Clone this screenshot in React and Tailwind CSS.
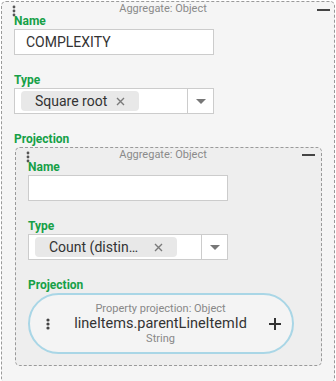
import React from "react";

const FONT = { fontFamily: "Roboto, 'Noto Sans', sans-serif" };

function Dots({ className = "", color = "#555", r = 1.5 }) {
  return (
    <svg width="4" height="12" viewBox="0 0 4 12" className={className}>
      {[2, 6, 10].map((cy) => (
        <circle key={cy} cx="2" cy={cy} r={r} fill={color} />
      ))}
    </svg>
  );
}

function XIcon() {
  return (
    <svg width="9" height="9" viewBox="0 0 9 9" className="shrink-0">
      <path d="M1 1L8 8M8 1L1 8" stroke="#7a7a7a" strokeWidth="1.4" />
    </svg>
  );
}

function Label({ children }) {
  return (
    <div className="text-[12px] leading-[15px] font-bold text-[#16a047]">{children}</div>
  );
}

function TextInput({ value }) {
  return (
    <div className="w-[200px] h-[26px] bg-white border border-[#cccccc] flex items-center pl-[11px] text-[14px] text-[#333]">
      {value}
    </div>
  );
}

function Select({ chip, truncateW }) {
  return (
    <div className="w-[200px] h-[26px] bg-white border border-[#cccccc] flex">
      <div className="flex-1 flex items-center pl-[6px]">
        <div className="h-[20px] bg-[#e8e8e8] rounded-[4px] flex items-center pl-[14px] pr-[14px] text-[14px] text-[#333]">
          {truncateW ? (
            <span className="block w-[96px] truncate">{chip}</span>
          ) : (
            <span>{chip}</span>
          )}
          <span className="ml-[9px] flex items-center">
            <XIcon />
          </span>
        </div>
      </div>
      <div className="w-[26px] border-l border-[#cccccc] flex items-center justify-center">
        <svg width="10" height="5" viewBox="0 0 10 5">
          <path d="M0 0H10L5 5Z" fill="#777" />
        </svg>
      </div>
    </div>
  );
}

function Header({ minusMt, pr, textPr }) {
  return (
    <div className={`flex items-start h-[12px] pl-[10px] ${pr}`}>
      <Dots className="mt-[3px] shrink-0" r={1.4} />
      <div className={`flex-1 text-center ${textPr} text-[11px] leading-[14px] text-[#8a8a8a]`}>
        Aggregate: Object
      </div>
      <div className={`${minusMt} w-[13px] h-[2px] bg-[#444] shrink-0`} />
    </div>
  );
}

export default function App() {
  return (
    <div className="bg-white w-[336px] h-[381px] overflow-hidden" style={FONT}>
      <div className="ml-[1px] mt-[1px] w-[334px] h-[382px] bg-[#f5f5f5] border border-dashed border-[#9a9a9a] rounded-[5px]">
        <Header minusMt="mt-[7px]" pr="pr-[4px]" textPr="pr-[7px]" />
        <div className="px-[12px]">
          <Label>Name</Label>
          <TextInput value="COMPLEXITY" />
          <div className="h-[18px]" />
          <Label>Type</Label>
          <Select chip="Square root" />
          <div className="h-[18px]" />
          <Label>Projection</Label>
          <div className="ml-[1px] w-[307px] bg-[#eeeeee] border border-dashed border-[#9a9a9a] rounded-[5px] pb-[11px]">
            <Header minusMt="mt-[6px]" pr="pr-[6px]" textPr="pr-[6px]" />
            <div className="px-[12px]">
              <Label>Name</Label>
              <TextInput value="" />
              <div className="h-[18px]" />
              <Label>Type</Label>
              <Select chip="Count (distinct)" truncateW />
              <div className="h-[18px]" />
              <Label>Projection</Label>
              <div className="w-[266px] h-[61px] rounded-full border-2 border-[#a9d6e6] bg-[#f4f4f4] flex items-center pl-[16px] pr-[11px]">
                <Dots color="#444" className="shrink-0" r={1.6} />
                <div className="flex-1 flex flex-col items-center pl-[2px]">
                  <div className="text-[11px] leading-[13px] text-[#888]">Property projection: Object</div>
                  <div className="text-[14.5px] leading-[17px] text-[#333]">lineItems.parentLineItemId</div>
                  <div className="text-[11px] leading-[13px] text-[#888]">String</div>
                </div>
                <svg width="12" height="12" viewBox="0 0 12 12" className="shrink-0">
                  <path d="M6 0V12M0 6H12" stroke="#333" strokeWidth="2" />
                </svg>
              </div>
            </div>
          </div>
        </div>
      </div>
    </div>
  );
}
